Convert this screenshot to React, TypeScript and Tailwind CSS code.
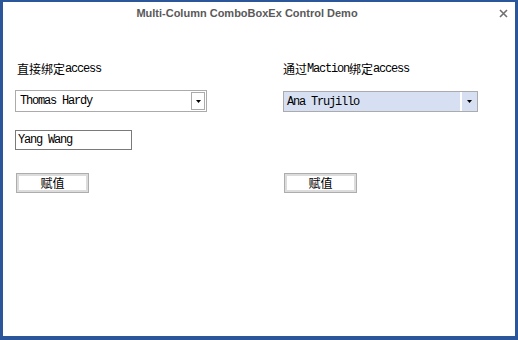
import React from 'react';

const cjk = "font-['Noto_Sans_CJK_SC',sans-serif] text-[12px]";
const mono = "font-['Liberation_Mono','Noto_Sans_CJK_SC',monospace] text-[12px] tracking-[-1.2px]";

function Arrow() {
  return (
    <svg width="5" height="3" viewBox="0 0 5 3" className="block">
      <path d="M0 0h5L2.5 3z" fill="#000" />
    </svg>
  );
}

function Label({ head, mid, tail }: { head: string; mid?: string; tail: string }) {
  return (
    <div className="h-[14px] flex items-center leading-[14px] text-black whitespace-nowrap">
      <span className={cjk}>{head}</span>
      {mid && <span className={mono}>{mid}</span>}
      {mid && <span className={cjk}>绑定</span>}
      <span className={mono}>{tail}</span>
    </div>
  );
}

function AssignButton() {
  return (
    <button className="w-[73px] h-[20px] ml-[1px] border border-[#adadad] bg-white shadow-[inset_0_0_0_2px_#dcdcdc] flex items-center justify-center text-black">
      <span className={cjk}>赋值</span>
    </button>
  );
}

export default function App() {
  return (
    <div className="w-[518px] h-[340px] bg-white border-[#2b579a] border-t-2 border-x-[3px] border-b-[4px] flex flex-col">
      {/* Title bar */}
      <div className="h-[22px] flex items-center">
        <div className="flex-1 text-center font-['Liberation_Sans',sans-serif] font-bold text-[11px] text-[#595959]">
          Multi-Column ComboBoxEx Control Demo
        </div>
        <div className="w-[24px] flex items-center justify-center">
          <svg width="9" height="9" viewBox="0 0 9 9">
            <path d="M1 1l7 7M8 1L1 8" stroke="#707070" strokeWidth="1.6" />
          </svg>
        </div>
      </div>

      <div className="flex pl-[12px]">
        {/* Left column */}
        <div className="w-[268px] flex flex-col items-start">
          <div className="mt-[38px] pl-[2px]">
            <Label head="直接绑定" tail="access" />
          </div>
          <div className="mt-[14px] w-[192px] h-[22px] border border-[#ababab] flex items-center">
            <span className={`${mono} flex-1 pl-[4px] text-black`}>Thomas Hardy</span>
            <div className="w-[14px] h-[18px] mr-[1px] border border-[#ababab] flex items-center justify-center">
              <Arrow />
            </div>
          </div>
          <div className="mt-[18px] w-[117px] h-[20px] border border-[#7a7a7a] flex items-center">
            <span className={`${mono} pl-[2px] text-black`}>Yang Wang</span>
          </div>
          <div className="mt-[23px]">
            <AssignButton />
          </div>
        </div>

        {/* Right column */}
        <div className="flex flex-col items-start">
          <div className="mt-[38px]">
            <Label head="通过" mid="Maction" tail="access" />
          </div>
          <div className="mt-[15px] w-[195px] h-[21px] border border-[#ababab] bg-[#d6e0f2] flex items-center">
            <span className={`${mono} flex-1 pl-[3px] text-black`}>Ana Trujillo</span>
            <div className="w-[2px] h-full bg-white" />
            <div className="w-[15px] h-full flex items-center justify-center">
              <Arrow />
            </div>
          </div>
          <div className="mt-[61px]">
            <AssignButton />
          </div>
        </div>
      </div>
    </div>
  );
}
